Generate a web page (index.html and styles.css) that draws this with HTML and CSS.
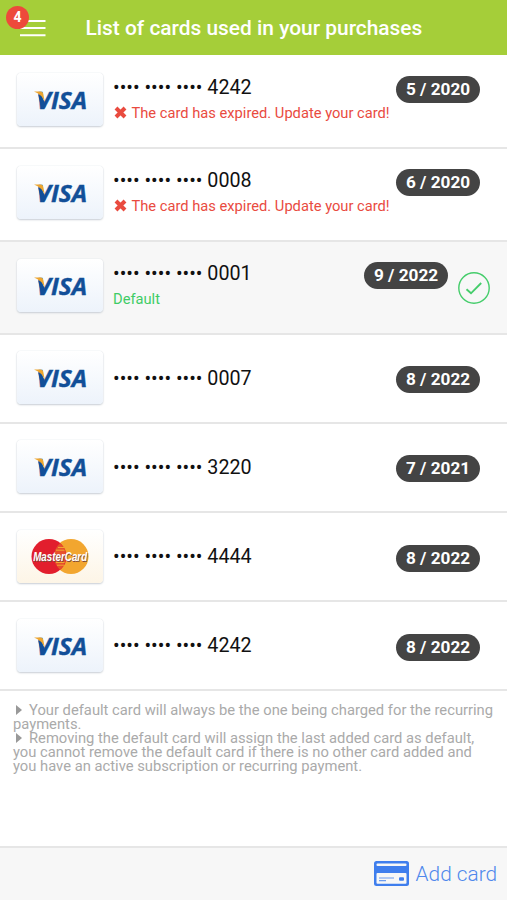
FILE: index.html
```html
<!DOCTYPE html>
<html lang="en">
<head>
<meta charset="utf-8">
<title>List of cards</title>
<link rel="stylesheet" href="styles.css">
</head>
<body>
<svg class="defs" width="0" height="0" aria-hidden="true">
  <defs>
    <symbol id="visa" viewBox="0 0 86 53">
      <text class="visa-text" x="19.5" y="35.5" textLength="50.5" lengthAdjust="spacingAndGlyphs">VISA</text>
      <path d="M17 18.6H23.5Q25.8 18.6 26.2 20.6L27.8 29Q24.8 21.5 17 18.6Z" fill="#eda52f"/>
      <path d="M21 21Q25 23.5 27.5 28.5L28.5 34L26 35.5H24.5Z" fill="#124f98"/>
    </symbol>
    <symbol id="cross" viewBox="0 0 13 13">
      <path d="M2 2L11 11M11 2L2 11" stroke="#e94b3f" stroke-width="4"/>
    </symbol>
  </defs>
</svg>
<div class="app">
  <header class="topbar">
    <div class="menu">
      <svg width="26" height="18" viewBox="0 0 26 18"><path d="M0 2H25.5M0 9.1H25.5M0 16.2H25.5" stroke="#fff" stroke-width="2"/></svg>
      <span class="count">4</span>
    </div>
    <h1>List of cards used in your purchases</h1>
  </header>
  <main class="cards">
    <section class="row tall first">
      <svg class="logo"><use href="#visa"/></svg>
      <div class="info"><p class="number">•••• •••• •••• 4242</p><p class="note error"><svg class="cross"><use href="#cross"/></svg><span>The card has expired. Update your card!</span></p></div>
      <span class="date">5 / 2020</span>
    </section>
    <section class="row tall">
      <svg class="logo"><use href="#visa"/></svg>
      <div class="info"><p class="number">•••• •••• •••• 0008</p><p class="note error"><svg class="cross"><use href="#cross"/></svg><span>The card has expired. Update your card!</span></p></div>
      <span class="date">6 / 2020</span>
    </section>
    <section class="row tall selected">
      <svg class="logo"><use href="#visa"/></svg>
      <div class="info"><p class="number">•••• •••• •••• 0001</p><p class="note ok">Default</p></div>
      <span class="date">9 / 2022</span>
      <svg class="check" viewBox="0 0 32 32"><circle cx="16" cy="16" r="15.2"/><path d="M8.5 17.2L13 21.3L23.2 11"/></svg>
    </section>
    <section class="row">
      <svg class="logo"><use href="#visa"/></svg>
      <div class="info"><p class="number">•••• •••• •••• 0007</p></div>
      <span class="date">8 / 2022</span>
    </section>
    <section class="row">
      <svg class="logo"><use href="#visa"/></svg>
      <div class="info"><p class="number">•••• •••• •••• 3220</p></div>
      <span class="date">7 / 2021</span>
    </section>
    <section class="row">
      <svg class="logo mc" viewBox="0 0 86 53">
        <circle cx="54" cy="26.5" r="17.5" fill="#f2a62f"/>
        <circle cx="32" cy="26.5" r="17.5" fill="#e21e2d"/>
        <path d="M43 13.3A17.5 17.5 0 0 1 43 39.7A17.5 17.5 0 0 1 43 13.3" fill="#e7512b"/>
        <path d="M41 17.5H47M39 20.2H47.5M39 32.5H47.5M40 35.2H47" stroke="#f2a62f" stroke-width="1"/>
        <text class="mc-text" x="16.2" y="30.8" textLength="54" lengthAdjust="spacingAndGlyphs">MasterCard</text>
      </svg>
      <div class="info"><p class="number">•••• •••• •••• 4444</p></div>
      <span class="date">8 / 2022</span>
    </section>
    <section class="row">
      <svg class="logo"><use href="#visa"/></svg>
      <div class="info"><p class="number">•••• •••• •••• 4242</p></div>
      <span class="date">8 / 2022</span>
    </section>
  </main>
  <div class="help">
    <p><i class="arrow"></i>Your default card will always be the one being charged for the recurring<br>payments.</p>
    <p><i class="arrow"></i>Removing the default card will assign the last added card as default,<br>you cannot remove the default card if there is no other card added and<br>you have an active subscription or recurring payment.</p>
  </div>
  <footer class="bottom">
    <svg width="35" height="25" viewBox="0 0 35 25"><rect width="35" height="25" rx="2.5" fill="#3f7eed"/><rect x="2.5" y="2.4" width="30" height="2.5" rx="1" fill="#f7f7f7"/><rect x="2.5" y="12" width="30" height="10.8" rx="1" fill="#f7f7f7"/><path d="M5 17H20M5 19.6H12" stroke="#6c9cef" stroke-width="1.2"/><rect x="25" y="16.2" width="5" height="3.5" rx="1" fill="#3f7eed"/></svg>
    <span>Add card</span>
  </footer>
</div>
</body>
</html>
```

FILE: styles.css
```css
* { box-sizing: border-box; }
body { margin: 0; font-family: Roboto, "Liberation Sans", sans-serif; background: #fff; }
p, h1 { margin: 0; white-space: nowrap; }
.defs { position: absolute; }
.app { height: 900px; display: flex; flex-direction: column; overflow: hidden; }

.topbar { height: 55px; flex: none; background: #a5ce39; display: flex; align-items: center; color: #fff; }
.menu { position: relative; width: 26px; height: 18px; margin-left: 20px; }
.menu svg { display: block; }
.count { position: absolute; left: -14px; top: -13px; width: 23px; height: 23px; border-radius: 50%; background: #ed4a3b; font-size: 14px; font-weight: 700; line-height: 23px; text-align: center; }
h1 { margin-left: 39.5px; font-size: 20.9px; font-weight: 500; line-height: 28px; }

.row { height: 89.2px; display: flex; align-items: center; padding: 0 27px 0 17px; border-bottom: 2px solid #e6e6e6; }
.row.tall { height: 92.8px; align-items: flex-start; padding-top: 17px; }
.row.first { height: 94px; padding-top: 18px; }
.logo { width: 86px; height: 53px; flex: none; border-radius: 4px; background: linear-gradient(#fff, #edf3fb); box-shadow: 0 0 1px #c9d0d9, 0 1px 2px #c8cdd4; }
.row:not(.tall) .logo { margin-top: -1px; }
.logo.mc { background: linear-gradient(#fff, #fdf5e6); }
.visa-text { font: italic 700 23px "Open Sans", sans-serif; fill: #124f98; stroke: #124f98; stroke-width: .4px; }
.mc-text { font: italic 700 12.5px "Liberation Sans", sans-serif; fill: #fff; text-shadow: .6px .8px .5px #7b493b; }
.info { margin-left: 10px; flex: 1; min-width: 0; }
.number { font-size: 19.7px; line-height: 28px; color: #111; margin-top: 1px; }
.note { font-size: 14.7px; line-height: 20px; margin-top: 1px; display: flex; align-items: center; }
.error { color: #e94b3f; }
.cross { width: 13px; height: 13px; margin: -1px 4.5px 0 1px; }
.ok { color: #3fcc66; }
.date { width: 84px; height: 27px; flex: none; border-radius: 14px; background: #444; color: #fff; font-size: 17.2px; font-weight: 700; line-height: 27px; text-align: center; margin-top: 3px; }
.selected { background: #f7f7f7; padding-right: 17px; }
.check { width: 32px; height: 32px; margin: 13px 0 0 10px; fill: none; stroke: #45cd6b; stroke-width: 1.4; }
.check path { stroke-width: 1.9; }

.help { flex: 1; padding: 13px 13px 0; color: #aaa; font-size: 14.75px; line-height: 13.8px; }
.arrow { display: inline-block; width: 0; height: 0; margin: 0 7px 0 3px; border-left: 6px solid #999; border-top: 5px solid transparent; border-bottom: 5px solid transparent; vertical-align: 0; }
.bottom { height: 54px; flex: none; display: flex; align-items: center; justify-content: flex-end; gap: 7px; padding: 0 10px 1px 0; border-top: 2px solid #e6e6e6; background: #f7f7f7; color: #4e88ec; font-size: 20.8px; font-weight: 300; }
```
